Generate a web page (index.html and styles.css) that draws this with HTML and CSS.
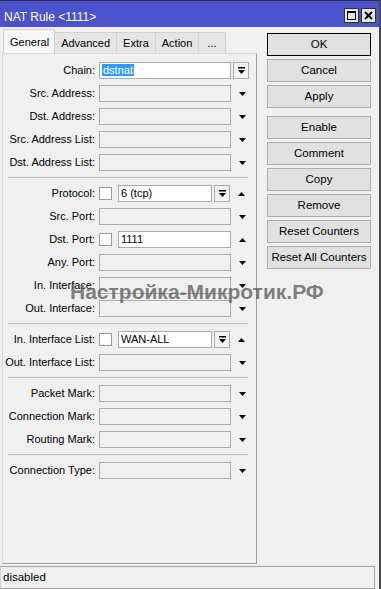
FILE: index.html
```html
<!DOCTYPE html>
<html lang="en">
<head>
  <meta charset="UTF-8" />
  <title>NAT Rule &lt;1111&gt;</title>
  <link rel="stylesheet" href="styles.css">
</head>
<body>

  <div class="window">
    <div class="titlebar">
      <span class="title">NAT Rule &lt;1111&gt;</span>
      <div class="title-btns">
        <span class="tbtn">
          <svg width="9" height="9" viewBox="0 0 9 9"><rect x="0.5" y="0.5" width="8" height="8" fill="none" stroke="#000"/><rect x="0" y="0" width="9" height="2" fill="#000"/></svg>
        </span>
        <span class="tbtn">
          <svg width="9" height="9" viewBox="0 0 9 9"><path d="M1 1 L8 8 M8 1 L1 8" stroke="#000" stroke-width="2"/></svg>
        </span>
      </div>
    </div>

    <div class="main">
      <div class="editor">
        <div class="tabs">
          <div class="tab active">General</div>
          <div class="tab">Advanced</div>
          <div class="tab">Extra</div>
          <div class="tab">Action</div>
          <div class="tab more">...</div>
        </div>

        <div class="panel">
          <div class="row">
            <span class="lbl">Chain:</span>
            <div class="field on wide"><span class="hl">dstnat</span></div>
            <span class="ddbtn"><svg width="7" height="7" viewBox="0 0 7 7"><rect x="0" y="0" width="7" height="1.5"/><polygon points="0,3 7,3 3.5,7"/></svg></span>
          </div>
          <div class="row">
            <span class="lbl">Src. Address:</span>
            <div class="field wide"></div>
            <span class="arrow"><svg width="7" height="4" viewBox="0 0 7 4"><polygon points="0,0 7,0 3.5,4"/></svg></span>
          </div>
          <div class="row">
            <span class="lbl">Dst. Address:</span>
            <div class="field wide"></div>
            <span class="arrow"><svg width="7" height="4" viewBox="0 0 7 4"><polygon points="0,0 7,0 3.5,4"/></svg></span>
          </div>
          <div class="row">
            <span class="lbl">Src. Address List:</span>
            <div class="field wide"></div>
            <span class="arrow"><svg width="7" height="4" viewBox="0 0 7 4"><polygon points="0,0 7,0 3.5,4"/></svg></span>
          </div>
          <div class="row">
            <span class="lbl">Dst. Address List:</span>
            <div class="field wide"></div>
            <span class="arrow"><svg width="7" height="4" viewBox="0 0 7 4"><polygon points="0,0 7,0 3.5,4"/></svg></span>
          </div>

          <div class="sep"></div>

          <div class="row">
            <span class="lbl">Protocol:</span>
            <span class="check"></span>
            <div class="field on short">6 (tcp)</div>
            <span class="ddbtn"><svg width="7" height="7" viewBox="0 0 7 7"><rect x="0" y="0" width="7" height="1.5"/><polygon points="0,3 7,3 3.5,7"/></svg></span>
            <span class="arrow"><svg width="7" height="4" viewBox="0 0 7 4"><polygon points="0,4 7,4 3.5,0"/></svg></span>
          </div>
          <div class="row">
            <span class="lbl">Src. Port:</span>
            <div class="field wide"></div>
            <span class="arrow"><svg width="7" height="4" viewBox="0 0 7 4"><polygon points="0,0 7,0 3.5,4"/></svg></span>
          </div>
          <div class="row">
            <span class="lbl">Dst. Port:</span>
            <span class="check"></span>
            <div class="field on mid">1111</div>
            <span class="arrow"><svg width="7" height="4" viewBox="0 0 7 4"><polygon points="0,4 7,4 3.5,0"/></svg></span>
          </div>
          <div class="row">
            <span class="lbl">Any. Port:</span>
            <div class="field wide"></div>
            <span class="arrow"><svg width="7" height="4" viewBox="0 0 7 4"><polygon points="0,0 7,0 3.5,4"/></svg></span>
          </div>
          <div class="row">
            <span class="lbl">In. Interface:</span>
            <div class="field wide"></div>
            <span class="arrow"><svg width="7" height="4" viewBox="0 0 7 4"><polygon points="0,0 7,0 3.5,4"/></svg></span>
          </div>
          <div class="row">
            <span class="lbl">Out. Interface:</span>
            <div class="field wide"></div>
            <span class="arrow"><svg width="7" height="4" viewBox="0 0 7 4"><polygon points="0,0 7,0 3.5,4"/></svg></span>
          </div>

          <div class="sep"></div>

          <div class="row">
            <span class="lbl">In. Interface List:</span>
            <span class="check"></span>
            <div class="field on short">WAN-ALL</div>
            <span class="ddbtn"><svg width="7" height="7" viewBox="0 0 7 7"><rect x="0" y="0" width="7" height="1.5"/><polygon points="0,3 7,3 3.5,7"/></svg></span>
            <span class="arrow"><svg width="7" height="4" viewBox="0 0 7 4"><polygon points="0,4 7,4 3.5,0"/></svg></span>
          </div>
          <div class="row">
            <span class="lbl">Out. Interface List:</span>
            <div class="field wide"></div>
            <span class="arrow"><svg width="7" height="4" viewBox="0 0 7 4"><polygon points="0,0 7,0 3.5,4"/></svg></span>
          </div>

          <div class="sep"></div>

          <div class="row">
            <span class="lbl">Packet Mark:</span>
            <div class="field wide"></div>
            <span class="arrow"><svg width="7" height="4" viewBox="0 0 7 4"><polygon points="0,0 7,0 3.5,4"/></svg></span>
          </div>
          <div class="row">
            <span class="lbl">Connection Mark:</span>
            <div class="field wide"></div>
            <span class="arrow"><svg width="7" height="4" viewBox="0 0 7 4"><polygon points="0,0 7,0 3.5,4"/></svg></span>
          </div>
          <div class="row">
            <span class="lbl">Routing Mark:</span>
            <div class="field wide"></div>
            <span class="arrow"><svg width="7" height="4" viewBox="0 0 7 4"><polygon points="0,0 7,0 3.5,4"/></svg></span>
          </div>

          <div class="sep"></div>

          <div class="row">
            <span class="lbl">Connection Type:</span>
            <div class="field wide"></div>
            <span class="arrow"><svg width="7" height="4" viewBox="0 0 7 4"><polygon points="0,0 7,0 3.5,4"/></svg></span>
          </div>
        </div>
      </div>

      <div class="buttons">
        <div class="btn default">OK</div>
        <div class="btn">Cancel</div>
        <div class="btn gap-after">Apply</div>
        <div class="btn">Enable</div>
        <div class="btn">Comment</div>
        <div class="btn">Copy</div>
        <div class="btn">Remove</div>
        <div class="btn">Reset Counters</div>
        <div class="btn">Reset All Counters</div>
      </div>
    </div>

    <div class="status">disabled</div>

    <div class="watermark">Настройка-Микротик.РФ</div>
  </div>

</body>
</html>
```

FILE: styles.css
```css
body {
  margin: 0;
  font-family: 'Liberation Sans', Arial, sans-serif;
  font-size: 11px;
  color: #000;
  background-color: #f0f0f0;
}
.window {
  position: relative;
  width: 381px;
  height: 589px;
  box-sizing: border-box;
  border-right: 2px solid #4a4a4a;
  background-color: #f0f0f0;
  display: flex;
  flex-direction: column;
  overflow: hidden;
}
.titlebar {
  height: 26px;
  border-top: 1px solid #2c2c5c;
  background-color: #4b52cc;
  display: flex;
  align-items: flex-start;
  flex-shrink: 0;
}
.title {
  color: #fff;
  font-size: 12px;
  line-height: 14px;
  padding: 9px 0 0 4px;
}
.title-btns {
  margin: 7px 3px 0 auto;
  display: flex;
  gap: 2px;
}
.tbtn {
  width: 13px;
  height: 13px;
  border: 1px solid #303030;
  background-color: #e6e6e6;
  display: flex;
  align-items: center;
  justify-content: center;
}
.main {
  flex: 1;
  display: flex;
  margin-top: 2px;
  min-height: 0;
}
.editor {
  width: 255px;
  margin-left: 2px;
  display: flex;
  flex-direction: column;
}
.tabs {
  height: 24px;
  display: flex;
  align-items: flex-end;
  padding-left: 1px;
  flex-shrink: 0;
}
.tab {
  height: 20px;
  line-height: 20px;
  padding: 0 6px;
  background-color: #e5e5e5;
  border: 1px solid #d2d2d2;
  border-bottom: none;
  border-left: none;
}
.tab.active {
  height: 23px;
  line-height: 25px;
  padding: 0 5px 0 6px;
  background-color: #f7f7f7;
  border-color: #cfcfcf;
  border-left: 1px solid #cfcfcf;
}
.tab.more {
  padding: 0 8px;
}
.panel {
  flex: 1;
  border: 1px solid #a0a0a0;
  border-top-color: #d9d9d9;
  border-left-color: #d9d9d9;
  padding-top: 8px;
}
.row {
  height: 17px;
  margin-bottom: 6px;
  display: flex;
  align-items: center;
}
.lbl {
  width: 92px;
  margin-right: 4px;
  text-align: right;
  white-space: nowrap;
  line-height: 17px;
}
.field {
  height: 17px;
  box-sizing: border-box;
  border: 1px solid #ababab;
  background-color: #f0f0f0;
  line-height: 15px;
  padding-left: 2px;
  white-space: nowrap;
  overflow: hidden;
}
.field.on {
  background-color: #fff;
}
.field.wide {
  width: 132px;
}
.field.mid {
  width: 113px;
  margin-left: 6px;
}
.field.short {
  width: 94px;
  margin-left: 6px;
}
.hl {
  background-color: #3399ff;
  color: #fff;
  padding: 0 1px;
}
.check {
  width: 13px;
  height: 13px;
  box-sizing: border-box;
  border: 1px solid #9a9a9a;
  background-color: #fff;
}
.ddbtn {
  width: 16px;
  height: 17px;
  box-sizing: border-box;
  margin-left: 2px;
  border: 1px solid #ababab;
  background-color: #f4f4f4;
  display: flex;
  align-items: center;
  justify-content: center;
}
.arrow {
  width: 21px;
  padding-left: 1px;
  display: flex;
  justify-content: center;
}
.sep {
  width: 240px;
  height: 1px;
  margin: 1px 0 7px 5px;
  background-color: #bcbcbc;
}
.buttons {
  margin: 4px 0 0 10px;
  display: flex;
  flex-direction: column;
  gap: 3px;
}
.btn {
  width: 104px;
  height: 23px;
  box-sizing: border-box;
  border: 1px solid #adadad;
  background-color: #e1e1e1;
  text-align: center;
  line-height: 21px;
  font-size: 11.5px;
}
.btn.default {
  border-color: #000;
}
.btn.gap-after {
  margin-bottom: 5px;
}
.status {
  height: 23px;
  width: 375px;
  box-sizing: border-box;
  margin-top: 2px;
  border: 1px solid #a0a0a0;
  border-left-color: #d0d0d0;
  padding-left: 2px;
  line-height: 21px;
  font-size: 11.5px;
  flex-shrink: 0;
}
.watermark {
  position: absolute;
  left: 70px;
  top: 280px;
  font-size: 21px;
  font-weight: bold;
  color: rgba(95, 95, 95, 0.8);
  white-space: nowrap;
}
```
